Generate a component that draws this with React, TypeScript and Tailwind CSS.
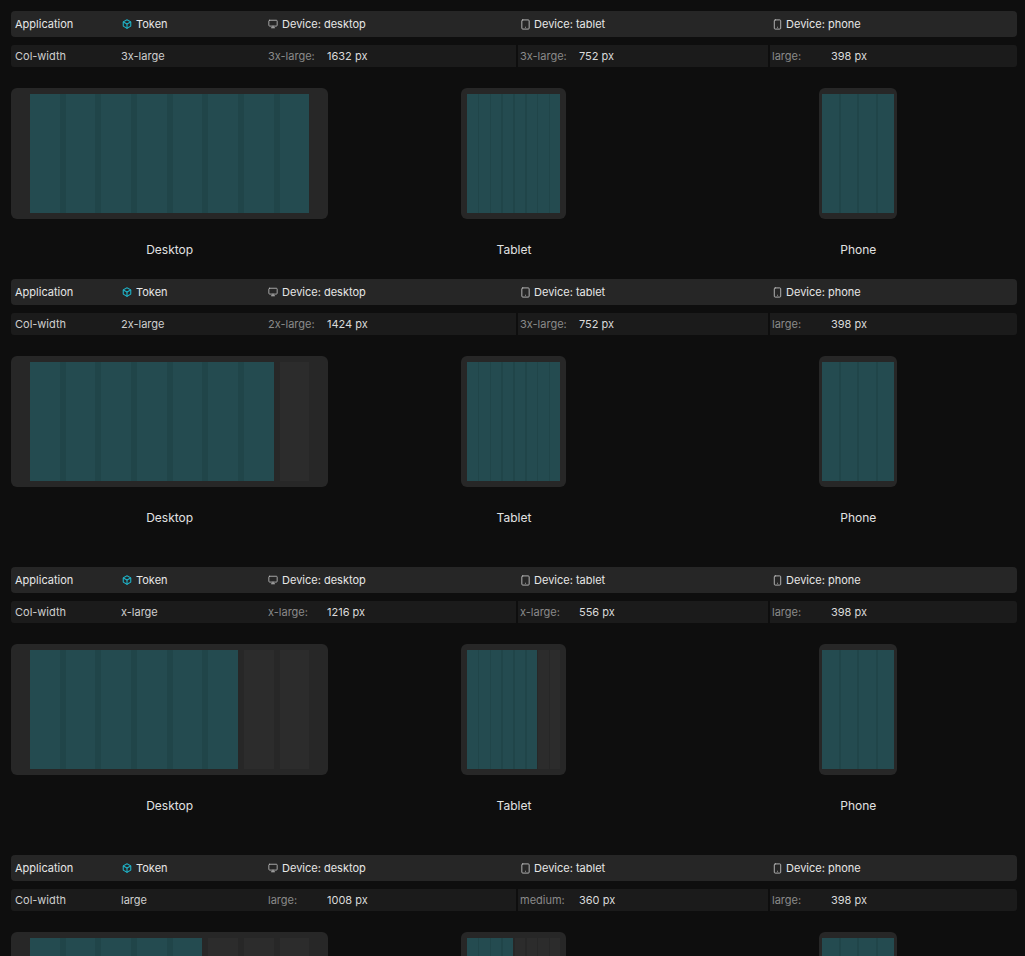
import React from 'react';
import { Box, Monitor, Smartphone, Tablet } from 'lucide-react';

type Value = { label: string; px: string; active: number };

type Section = {
  token: string;
  desktop: Value;
  tablet: Value;
  phone: Value;
};

const SECTIONS: Section[] = [
  {
    token: '3x-large',
    desktop: { label: '3x-large:', px: '1632 px', active: 8 },
    tablet: { label: '3x-large:', px: '752 px', active: 8 },
    phone: { label: 'large:', px: '398 px', active: 4 },
  },
  {
    token: '2x-large',
    desktop: { label: '2x-large:', px: '1424 px', active: 7 },
    tablet: { label: '3x-large:', px: '752 px', active: 8 },
    phone: { label: 'large:', px: '398 px', active: 4 },
  },
  {
    token: 'x-large',
    desktop: { label: 'x-large:', px: '1216 px', active: 6 },
    tablet: { label: 'x-large:', px: '556 px', active: 6 },
    phone: { label: 'large:', px: '398 px', active: 4 },
  },
  {
    token: 'large',
    desktop: { label: 'large:', px: '1008 px', active: 5 },
    tablet: { label: 'medium:', px: '360 px', active: 4 },
    phone: { label: 'large:', px: '398 px', active: 4 },
  },
];

const GRID = 'grid grid-cols-[107px_146px_252px_252px_1fr]';

const HeaderBar = () => (
  <div className={`${GRID} h-[26px] items-center rounded-[4px] bg-[#262626] text-[11px] text-[#e6e6e6]`}>
    <div className="pl-[4px]">Application</div>
    <div className="flex items-center gap-[4px] pl-[4px]">
      <Box size={10} strokeWidth={2.6} className="text-[#1fb3c8]" />
      <span>Token</span>
    </div>
    <div className="flex items-center gap-[4px] pl-[4px]">
      <Monitor size={10} strokeWidth={2} className="text-[#bdbdbd]" />
      <span>Device: desktop</span>
    </div>
    <div className="flex items-center gap-[3px] pl-[4px]">
      <Tablet size={11} strokeWidth={2} className="text-[#bdbdbd]" />
      <span>Device: tablet</span>
    </div>
    <div className="flex items-center gap-[3px] pl-[4px]">
      <Smartphone size={11} strokeWidth={2} className="text-[#bdbdbd]" />
      <span>Device: phone</span>
    </div>
  </div>
);

const ValueCell = ({ value, divider }: { value: Value; divider?: boolean }) => (
  <div className={`flex h-full items-center ${divider ? 'border-l-2 border-[#0e0e0e] pl-[2px]' : 'pl-[4px]'}`}>
    <span className="w-[59px] text-[#8a8a8a]">{value.label}</span>
    <span className="text-[#dadada]">{value.px}</span>
  </div>
);

const ValueRow = ({ section }: { section: Section }) => (
  <div className={`${GRID} mt-[8px] h-[22px] items-center overflow-hidden rounded-[3px] bg-[#1b1b1b] text-[11px]`}>
    <div className="pl-[4px] text-[#cfcfcf]">Col-width</div>
    <div className="pl-[3px] text-[#cfcfcf]">{section.token}</div>
    <ValueCell value={section.desktop} />
    <ValueCell value={section.tablet} divider />
    <ValueCell value={section.phone} divider />
  </div>
);

// Columns of a device frame: the active ones are teal, the rest grey.
const Columns = ({ total, active, gap }: { total: number; active: number; gap: string }) => (
  <div className={`grid h-full ${gap} ${total === 8 ? 'grid-cols-8' : 'grid-cols-4'}`}>
    <div className="grid h-full grid-cols-subgrid bg-[#204549]" style={{ gridColumn: `span ${active}` }}>
      {Array.from({ length: active }).map((_, i) => (
        <div key={i} className="h-full bg-[#244b50]" />
      ))}
    </div>
    {Array.from({ length: total - active }).map((_, i) => (
      <div key={i} className="h-full bg-[#2c2c2c]" />
    ))}
  </div>
);

const Device = ({ label, children }: { label: string; children: React.ReactNode }) => (
  <div className="flex flex-col items-center">
    {children}
    <div className="mt-[23px] text-[12px] leading-4 text-[#e2e2e2]">{label}</div>
  </div>
);

const Frames = ({ section }: { section: Section }) => (
  <div className="mt-[21px] grid grid-cols-3 gap-x-[27px]">
    <Device label="Desktop">
      <div className="h-[131px] w-full rounded-[6px] bg-[#272727] px-[19px] py-[6px]">
        <Columns total={8} active={section.desktop.active} gap="gap-[6px]" />
      </div>
    </Device>
    <Device label="Tablet">
      <div className="h-[131px] w-[105px] rounded-[6px] bg-[#272727] p-[6px]">
        <Columns total={8} active={section.tablet.active} gap="gap-[1.5px]" />
      </div>
    </Device>
    <Device label="Phone">
      <div className="h-[131px] w-[78px] rounded-[6px] bg-[#272727] px-[3px] py-[6px]">
        <Columns total={4} active={section.phone.active} gap="gap-[2px]" />
      </div>
    </Device>
  </div>
);

export default function App() {
  return (
    <div
      className="min-h-screen bg-[#0e0e0e] pl-[11px] pr-[8px] pt-[11px]"
      style={{ fontFamily: 'Inter, "Noto Sans", sans-serif' }}
    >
      {SECTIONS.map((section, i) => (
        <div key={section.token} className={i === 0 ? 'mb-[21px]' : 'mb-[41px]'}>
          <HeaderBar />
          <ValueRow section={section} />
          <Frames section={section} />
        </div>
      ))}
    </div>
  );
}
